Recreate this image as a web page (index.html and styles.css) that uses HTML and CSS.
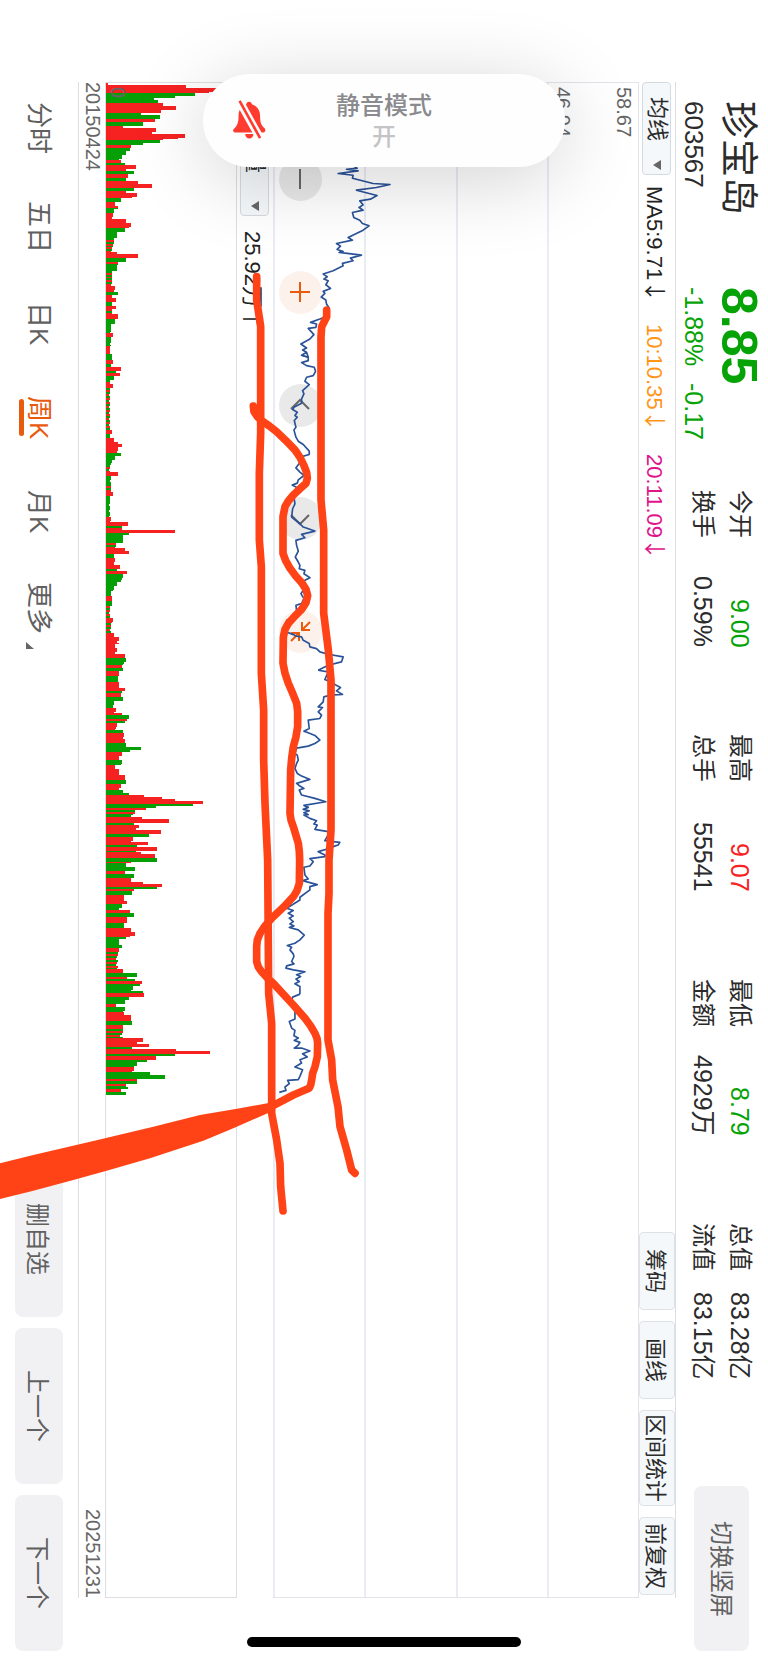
FILE: index.html
```html
<!DOCTYPE html>
<html lang="zh-CN">
<head>
<meta charset="utf-8">
<meta name="viewport" content="width=device-width, initial-scale=1">
<title>珍宝岛 603567</title>
<link rel="stylesheet" href="styles.css">
</head>
<body>
<div class="app">
  <header class="quote">
    <div class="pair">
      <h1 class="pair-main name">珍宝岛</h1>
      <div class="pair-sub code">603567</div>
    </div>
    <div class="pair down">
      <div class="pair-main price">8.85</div>
      <div class="pair-sub changes"><span>-1.88%</span><span>-0.17</span></div>
    </div>
    <dl class="stats">
      <div class="stat"><dt>今开</dt><dd class="down">9.00</dd></div>
      <div class="stat"><dt>最高</dt><dd class="up">9.07</dd></div>
      <div class="stat"><dt>最低</dt><dd class="down">8.79</dd></div>
      <div class="stat"><dt>总值</dt><dd>83.28亿</dd></div>
      <div class="stat"><dt>换手</dt><dd>0.59%</dd></div>
      <div class="stat"><dt>总手</dt><dd>55541</dd></div>
      <div class="stat"><dt>金额</dt><dd>4929万</dd></div>
      <div class="stat"><dt>流值</dt><dd>83.15亿</dd></div>
    </dl>
    <button class="soft-button switch" type="button">切换竖屏</button>
  </header>

  <main class="board">
    <div class="toolbar">
      <div class="picker">
        <select aria-label="主图指标"><option>均线</option></select>
        <svg class="caret" viewBox="0 0 8 10" aria-hidden="true"><path d="M8 0v10L0 5z"/></svg>
      </div>
      <div class="legend">
        <span class="ma5">MA5:9.71<i class="trend">↓</i></span>
        <span class="ma10">10:10.35<i class="trend">↓</i></span>
        <span class="ma20">20:11.09<i class="trend">↓</i></span>
      </div>
      <div class="tools">
        <button type="button">筹码</button>
        <button type="button">画线</button>
        <button type="button">区间统计</button>
        <button type="button">前复权</button>
      </div>
    </div>

    <section class="price-chart" aria-label="周K走势">
      <div class="band"><span>58.67</span><span>46.94</span></div>
      <div class="band"></div>
      <div class="band"></div>
      <div class="band"></div>
      <div class="controls">
        <button type="button" class="round" aria-label="缩小"><svg viewBox="0 0 43 43"><path d="M21 11v20"/></svg></button>
        <button type="button" class="round warm" aria-label="放大"><svg viewBox="0 0 43 43"><path d="M21 11v20M11 21h20"/></svg></button>
        <button type="button" class="round" aria-label="左移"><svg viewBox="0 0 43 43"><path d="M12 25l9-9 9 9"/></svg></button>
        <button type="button" class="round" aria-label="右移"><svg viewBox="0 0 43 43"><path d="M12 18l9 9 9-9"/></svg></button>
        <button type="button" class="round warm" aria-label="还原"><svg viewBox="0 0 43 43"><path d="M23 12v8h8M23 20l8-8M12 23h8v8M20 23l-8 8"/></svg></button>
      </div>
      <svg class="series" viewBox="819 246 1098 4548" preserveAspectRatio="none" aria-hidden="true">
        <g transform="translate(0 180)"><polyline points="1040,300 1072,322 1040,325 1075,330 1015,338 1060,343 1058,352 1120,368 1171,371 1130,380 1070,388 1132,404 1112,415 1080,420 1090,432 1078,440 1090,448 1058,455 1062,470 1080,478 1088,488 1108,495 1090,508 1045,530 1058,538 1010,548 1022,556 1012,566 1030,572 1018,575 1085,583 1052,592 1060,600 1028,608 1030,615 1000,630 970,640 982,648 972,655 985,660 978,672 992,683 970,692 975,698 964,709 978,718 980,730 988,742 985,765 960,775 932,785 950,790 948,800 925,803 942,822 930,835 903,850 920,862 908,868 920,875 905,884 925,890 920,875"/></g>
        <g transform="translate(0 1020)"><polyline points="905,44 925,50 925,60 905,66 920,75 943,80 947,92 940,105 920,110 915,122 928,132 908,150 912,160 905,175 905,188 882,200 878,207 892,215 885,225 892,230 883,240 888,260 882,268 888,290 895,302 910,312 928,332 928,342 900,350 905,360 888,382 900,395 912,405 895,418 892,428 877,434 892,442 895,455 882,470 885,490 878,505 875,530 900,550 910,560 945,572 905,582 915,592 888,600 890,615 895,632 886,650 895,665 900,675 898,685 915,690 912,700 930,712 915,720 905,735 910,750 903,760 912,775 905,790 888,795 890,810 880,830 860,840 865,850 850,870 860,875 880,883 890,888 905,890 910,900 928,910 930,920 950,925 960,935 985,942 1030,950 1025,965 985,975 955,990"/></g>
        <g transform="translate(0 1980)"><polyline points="955,30 985,35 975,58 985,62 1022,82 1010,92 1028,103 990,105 972,110 970,125 955,140 968,142 955,155 965,165 960,175 925,180 928,205 912,213 925,218 945,226 960,240 945,250 925,258 890,264 885,280 892,285 895,300 890,310 885,325 892,340 905,348 930,358 890,370 900,378 912,385 898,390 905,405 945,415 978,425 912,436 925,442 910,448 928,452 912,458 925,464 912,465 930,475 950,482 942,492 952,495 945,508 985,515 985,525 975,542 1020,547 1015,555 1000,560 990,565 955,575 975,585 975,590 930,596 940,605 930,618 912,622 915,645 925,657 908,662 930,668 952,674 930,680 930,690 900,712 900,720 860,745 880,752 865,760 880,768 868,775 880,785 870,792 882,798 868,803 895,810 913,826 900,840 885,850 862,857 875,862 870,870 880,882 882,890 875,905 882,912 860,918 858,925 880,930 915,936 890,945 902,950 888,958 898,965 885,972 900,980 900,1003"/></g>
        <g transform="translate(0 2940)"><polyline points="900,43 878,52 875,65 885,90 885,118 868,125 875,145 885,152 882,168 895,175 883,182 900,188 895,196 883,205 905,205 930,214 908,222 922,232 900,240 905,250 885,262 908,270 900,290 895,300 863,302 868,312 855,322 858,332 838,338"/></g>
      </svg>
    </section>

    <div class="indicator">
      <div class="picker">
        <select aria-label="副图指标"><option>成交量</option></select>
        <svg class="caret" viewBox="0 0 8 10" aria-hidden="true"><path d="M8 0v10L0 5z"/></svg>
      </div>
      <span class="ma5">25.92万<i class="trend">↑</i></span>
    </div>

    <section class="volume-chart" aria-label="成交量">
      <svg class="bars" viewBox="0 0 131 1516" preserveAspectRatio="none" aria-hidden="true"><path class="bars-up"/><path class="bars-down"/></svg>
      <span class="zero">0</span>
    </section>

    <div class="dates"><time>20150424</time><time>20251231</time></div>
  </main>

  <footer class="bottom">
    <nav class="tabs">
      <button type="button">分时</button>
      <button type="button">五日</button>
      <button type="button">日K</button>
      <button type="button" class="active" aria-current="true">周K</button>
      <button type="button">月K</button>
      <button type="button" class="more">更多<svg viewBox="0 0 8 8" aria-hidden="true"><path d="M0 1v7h8z"/></svg></button>
    </nav>
    <div class="actions">
      <button class="soft-button" type="button">删自选</button>
      <button class="soft-button" type="button">上一个</button>
      <button class="soft-button" type="button">下一个</button>
    </div>
  </footer>
</div>

<svg class="marks" viewBox="0 0 2304 4989" preserveAspectRatio="none" aria-hidden="true">
  <polyline points="770,830 770,900 782,980 782,1300 778,1420 778,1620 784,1700 784,2020 791,2130 791,2280 795,2410 803,2580 806,2980 815,3070 815,3340 830,3420 840,3490 842,3560 849,3633"/>
  <polyline points="980,930 980,950 965,980 963,1010 963,1500 971,1590 971,1840 985,1950 993,2040 993,2490 987,2580 987,2680 984,2740 984,3120 995,3180 998,3240 1014,3320 1020,3380 1040,3450 1055,3510 1065,3520"/>
  <polyline points="760,1218 762,1235 772,1250 785,1262 808,1278 830,1295 858,1322 885,1350 900,1372 912,1397 920,1418 922,1435 918,1450 900,1466 880,1485 865,1503 855,1520 849,1550 849,1660 857,1682 870,1705 887,1728 905,1748 918,1768 923,1787 918,1808 905,1828 885,1848 865,1870 855,1888 850,1912 849,1990 855,2020 865,2050 878,2080 890,2110 893,2135 893,2180 888,2210 880,2240 875,2275 872,2310 870,2440 873,2460 880,2480 889,2510 895,2530 898,2555 899,2580 898,2650 891,2672 880,2690 850,2722 815,2755 795,2778 780,2800 772,2820 770,2840 770,2885 775,2901 785,2915 802,2934 820,2950 880,3015 915,3055 932,3078 945,3100 951,3115 953,3130 952,3170 945,3200 938,3220 935,3240 932,3255 928,3264 920,3268 880,3285 815,3319"/>
  <path d="M810 3308L720 3325 600 3345 460 3380 280 3423 100 3465 0 3490V3597L100 3572 220 3540 320 3512 450 3475 610 3422 700 3385 820 3332z"/>
</svg>

<aside class="banner" role="status">
  <svg viewBox="0 0 110 130" aria-hidden="true">
    <path class="bell" d="M57 11c6 0 8 5 9 9 14 4 24 16 24 34 0 20 3 28 12 36 6 4 5 14-2 14H14c-7 0-7-9-2-12 8-7 13-16 13-38 0-18 9-30 23-34 1-5 3-9 9-9zM45 109h25a12 13 0 0 1-25 0z"/>
    <path class="cut" d="M22 0l74 132"/>
    <path class="slash" d="M28 9l62 112"/>
  </svg>
  <strong>静音模式</strong>
  <span>开</span>
</aside>
<div class="home-bar"></div>
<script src="volume.js"></script>
</body>
</html>
```
FILE: styles.css
```css
* { box-sizing: border-box; }

body {
  margin: 0;
  background: #fff;
  color: #2b2b2b;
  font-family: "Liberation Sans", "Noto Sans CJK SC", sans-serif;
  font-size: 22px;
  overflow: hidden;
  position: relative;
}

button, select { font: inherit; color: inherit; margin: 0; border: 0; }
h1, dl, dd { margin: 0; }

.up { color: #f92222; }
.down { color: #06a306; }

/* The whole trading screen reads sideways: lines run down, blocks stack right to left. */
.app {
  writing-mode: vertical-rl;
  text-orientation: sideways;
  display: flex;
  flex-direction: column;
  width: 100%;
  height: 100vh;
  min-height: 1200px;
  white-space: nowrap;
}

.quote {
  display: flex;
  inline-size: 100%;
  block-size: 92px;
  flex: none;
  padding-inline: 101px 12px;
}
.pair { padding-block-start: 4px; inline-size: 186px; flex: none; }
.pair + .pair { inline-size: 203px; }
.pair-main { line-height: 50px; }
.pair-sub { line-height: 36px; margin-block-start: 2px; font-size: 25px; }
.name { font-size: 38px; font-weight: 400; }
.code { font-size: 26px; }
.price { font-size: 50px; font-weight: 700; }
.changes { display: flex; gap: 17px; }

.stats {
  flex: 1;
  display: grid;
  grid-template-columns: repeat(4, 1fr);
  grid-template-rows: 32px 32px;
  gap: 5px 87px;
  padding-block-start: 12px;
  font-size: 25px;
}
.stat { display: flex; justify-content: space-between; line-height: 32px; }
.stat dt { font-size: 24px; }

.soft-button {
  background: #f1f1f4;
  border-radius: 8px;
  color: #606060;
  font-size: 24px;
  padding: 0;
}
.switch { inline-size: 165px; block-size: 55px; margin-block-start: 19px; margin-inline-start: 106px; padding-block-end: 4px; }

.board {
  flex: 1;
  min-width: 0;
  display: flex;
  flex-direction: column;
  padding-inline: 82px 65px;
}

.toolbar, .indicator { display: flex; align-items: center; flex: none; }
.toolbar { block-size: 37px; border-right: 1px solid #dddde2; }
.indicator { block-size: 36px; gap: 15px; }

.picker { position: relative; margin-block-start: 2px; }
.picker select {
  appearance: none;
  display: block;
  writing-mode: vertical-rl;
  text-orientation: sideways;
  inline-size: 93px;
  block-size: 29px;
  padding: 0;
  padding-inline-start: 14px;
  background: #f4f8fa;
  border: 1px solid #d3dbe2;
  border-radius: 4px;
}
.indicator select { inline-size: 134px; padding-inline-start: 24px; }
.caret { position: absolute; bottom: 5px; left: 11px; width: 8px; height: 10px; fill: #666; }

.legend { display: flex; gap: 22px; padding-inline-start: 11px; }
.trend { font-family: "Noto Sans CJK SC", sans-serif; font-style: normal; }
.ma5 { color: #222; }
.ma10 { color: #ff9518; }
.ma20 { color: #e0148c; }

.tools { display: flex; gap: 11px; margin-inline: auto 3px; align-self: stretch; }
.tools button {
  min-inline-size: 78px;
  padding: 0;
  padding-inline: 3px;
  padding-block-end: 3px;
  background: #f4f8fa;
  border: 1px solid #dde2e6;
  border-radius: 4px;
}

.price-chart {
  position: relative;
  flex: 365 1 0;
  display: flex;
  flex-direction: column;
  border: 1px solid #e2e4e9;
  border-left: 0;
}
.band {
  flex: 1;
  display: flex;
  flex-direction: column;
  justify-content: space-between;
  padding-inline-start: 4px;
  padding-block: 2px;
  border-left: 2px solid #e9edf3;
  font-size: 20px;
  line-height: 24px;
  color: #666;
}
.series { position: absolute; inset: 0; width: 100%; height: 100%; fill: none; stroke: #2a5298; stroke-width: 5; stroke-linejoin: round; }

.controls { position: absolute; left: 6px; top: 75px; display: flex; gap: 70px; }
.round { width: 43px; height: 43px; border-radius: 50%; padding: 0; background: #e9e9e9; color: #666; }
.round.warm { background: #fdf1eb; color: #e85a0c; }
.round svg { display: block; width: 43px; height: 43px; fill: none; stroke: currentColor; stroke-width: 2; }

.volume-chart {
  position: relative;
  flex: 130 1 0;
  border: 1px solid #dddde2;
}
.bars { position: absolute; inset: 0; width: 100%; height: 100%; shape-rendering: crispEdges; }
.bars-up { fill: #f62222; }
.bars-down { fill: #06a006; }
.zero { position: absolute; left: 0; top: 4px; line-height: 24px; font-size: 20px; color: #666; }

.dates {
  flex: none;
  block-size: 27px;
  display: flex;
  justify-content: space-between;
  border-left: 1px solid #dddde2;
  font-size: 20px;
  line-height: 24px;
  color: #666;
}

.bottom {
  flex: none;
  block-size: 78px;
  padding-block: 15px;
  padding-inline: 102px 12px;
  display: flex;
  justify-content: space-between;
  align-items: center;
}
.tabs { display: flex; gap: 47px; }
.tabs button { position: relative; min-inline-size: 47px; padding: 0; background: none; font-size: 26px; line-height: 32px; color: #606060; }
.tabs .active { color: #e85a0c; }
.tabs .active::after {
  content: "";
  position: absolute;
  left: -4px;
  top: 5px;
  bottom: 5px;
  width: 5px;
  border-radius: 3px;
  background: #e85a0c;
}
.more svg { position: absolute; left: 3px; bottom: -15px; width: 8px; height: 8px; fill: #666; }
.actions { display: flex; gap: 11px; }
.actions .soft-button { inline-size: 156px; block-size: 48px; }

.marks { position: absolute; inset: 0; width: 100%; height: 100%; pointer-events: none; fill: none; stroke: #ff4316; stroke-width: 23; stroke-linecap: round; stroke-linejoin: round; }
.marks path { fill: #ff4316; stroke: none; }

.banner {
  position: absolute;
  top: 74px;
  left: 50%;
  transform: translateX(-50%);
  width: 362px;
  height: 93px;
  border-radius: 47px;
  background: #fefefe;
  box-shadow: 0 12px 80px rgba(0, 0, 0, .18);
  display: flex;
  flex-direction: column;
  align-items: center;
  justify-content: center;
  font-size: 24px;
  font-weight: 500;
  line-height: 31px;
  color: #c4c4c7;
}
.banner strong { font-weight: 500; color: #8a8a8f; }
.banner svg { position: absolute; left: 27px; top: 24px; width: 37px; height: 43px; }
.bell { fill: #ff3b30; }
.cut { stroke: #fefefe; stroke-width: 24; }
.slash { stroke: #ff3b30; stroke-width: 8; }

.home-bar {
  position: absolute;
  left: 50%;
  bottom: 16px;
  transform: translateX(-50%);
  width: 274px;
  height: 10px;
  border-radius: 5px;
  background: #000;
}
```
FILE: volume.js
```javascript
// Weekly volume: each entry is "offset,length,colour"; an entry holds until the next offset.
// r = up week, g = down week, m = alternating weeks.
const weeks = `82,2,r 84,81,r 87,125,r 92,90,g 95,70,g 97,48,g 99,52,g 102,57,r 105,71,r 109,55,r 112,35,g 114,54,g 118,49,r 121,37,g
125,17,r 127,50,r 133,80,r 138,57,r 139,54,g 142,37,g 144,25,r 147,24,g 150,20,g 154,16,g 159,15,r 162,19,g 164,30,r 168,20,r 170,28,g
173,22,r 177,20,g 180,32,r 183,46,r 187,28,g 190,20,r 192,31,r 196,26,r 197,15,g 201,9,r 205,12,m 208,8,g 212,7,r 218,20,r 222,25,r
227,19,g 231,11,g 237,8,m 246,6,m 251,11,r 253,32,r 257,20,g 261,12,m 264,11,g 270,6,m 277,6,m 285,9,r 291,12,g 294,6,r 297,10,r
301,6,g 305,10,r 308,6,m 313,12,r 318,9,g 323,5,g 332,7,r 336,5,g 345,4,r 353,6,g 359,7,r 363,5,g 366,15,r 370,10,g 372,14,r 375,8,g
379,4,m 383,7,r 387,4,m 429,6,r 433,4,g 437,8,r 441,12,r 443,16,r 446,12,r 452,15,g 455,9,g 459,6,g 465,4,m 472,12,r 476,5,g
484,5,m 492,7,r 496,4,g 517,5,r 522,22,r 526,16,m 530,70,r 533,23,g 535,17,g 539,17,g 543,10,m 548,19,r 551,23,r 554,8,g 558,9,r
565,14,r 569,11,g 571,21,r 574,17,g 580,15,g 582,11,g 586,8,g 591,5,g 596,6,r 601,6,g 606,4,m 618,7,r 623,5,m 633,8,r 637,13,r
644,9,r 648,11,r 654,19,r 658,20,g 665,16,r 668,17,g 671,13,r 676,12,g 682,13,r 688,19,r 691,16,g 693,15,r 697,17,g 701,8,g
708,10,r 713,16,r 715,23,g 719,21,r 721,19,g 723,11,r 730,17,g 733,18,r 739,19,r 743,20,g 747,35,g 750,24,g 752,16,r 757,13,r
760,16,g 765,9,r 769,13,r 775,19,r 780,20,g 784,15,r 790,17,g 793,23,g 795,38,r 797,56,r 799,70,r 801,98,r 804,88,g 806,50,g
808,40,r 810,29,m 815,25,g 817,36,r 819,63,r 823,28,g 825,33,r 828,30,r 830,55,r 834,43,g 837,27,r 842,42,r 845,31,g 847,51,r
851,30,g 852,35,r 854,49,r 858,51,g 862,25,r 863,20,g 867,29,g 871,19,r 874,28,g 878,25,r 882,37,r 884,56,r 887,51,g 889,28,r
891,26,g 895,18,r 901,21,r 904,16,g 910,24,r 913,28,g 917,21,r 923,18,g 928,25,r 932,29,r 937,20,g 939,13,g 945,16,g 948,13,r
952,12,m 969,17,r 973,31,g 977,21,r 979,29,g 981,36,r 984,34,g 986,27,g 991,37,g 993,38,r 997,23,g 1000,19,g 1004,10,r 1007,19,g
1012,18,r 1015,25,r 1021,26,g 1025,17,r 1029,17,m 1038,37,r 1042,31,r 1044,43,r 1047,26,g 1049,71,r 1051,105,r 1054,70,g
1056,50,r 1060,41,g 1062,31,g 1067,28,r 1072,44,g 1075,59,g 1079,31,r 1081,31,g 1084,20,m 1087,22,g 1089,15,r 1092,20,g 1095,0,r`
  .split(/\s+/)
  .map((entry) => entry.split(","));

const paths = { r: "", g: "" };
const bar = (x, y, length, height) => `M${x} ${y}h${length}v${height}h${-length}z`;
let week = 0;
for (let i = 0; i < weeks.length - 1; i += 1) {
  const [start, length, tone] = weeks[i];
  const end = Number(weeks[i + 1][0]);
  for (let y = Number(start), n = 0; y < end; y += 2, n += 1, week += 1) {
    const height = Math.min(2, end - y);
    const color = tone === "m" ? (week % 2 ? "r" : "g") : tone;
    const size = n < 2 ? Number(length) : Math.round(length * (1 - (week % 3) / 12));
    paths[color] += bar(0, y - 82, size, height);
  }
}
document.querySelector(".bars-up").setAttribute("d", paths.r);
document.querySelector(".bars-down").setAttribute("d", paths.g);
```
